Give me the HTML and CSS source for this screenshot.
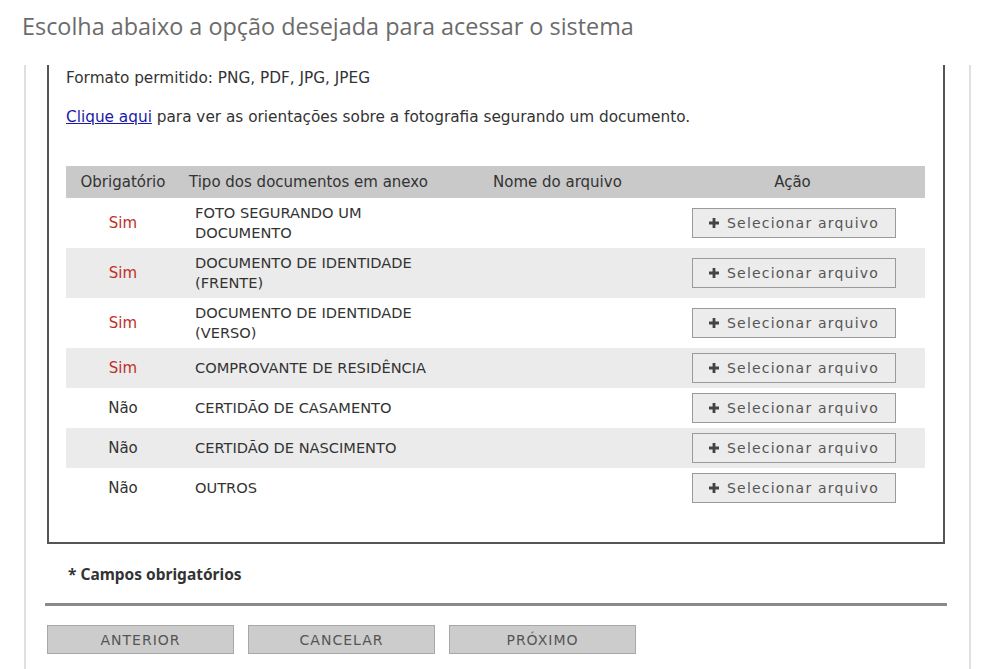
FILE: index.html
```html
<!DOCTYPE html>
<html lang="pt-BR">
<head>
<meta charset="utf-8">
<title>Anexos</title>
<link rel="stylesheet" href="styles.css">
</head>
<body>
<h1 class="title">Escolha abaixo a opção desejada para acessar o sistema</h1>
<div class="panel">
  <div class="box">
    <p class="info">Formato permitido: PNG, PDF, JPG, JPEG</p>
    <p class="info link-line"><a href="#" class="link">Clique aqui</a> para ver as orientações sobre a fotografia segurando um documento.</p>
    <table class="docs">
      <colgroup>
        <col class="c1"><col class="c2"><col class="c3"><col class="c4">
      </colgroup>
      <thead>
        <tr>
          <th class="h-req">Obrigatório</th>
          <th class="h-type">Tipo dos documentos em anexo</th>
          <th class="h-name">Nome do arquivo</th>
          <th class="h-act">Ação</th>
        </tr>
      </thead>
      <tbody>
        <tr>
          <td class="req yes">Sim</td>
          <td class="type"><div class="type-text">FOTO SEGURANDO UM DOCUMENTO</div></td>
          <td></td>
          <td class="act"><button class="pick"><svg class="plus" viewBox="0 0 10 10"><path d="M3.6 0h2.8v3.6H10v2.8H6.4V10H3.6V6.4H0V3.6h3.6z"/></svg>Selecionar arquivo</button></td>
        </tr>
        <tr>
          <td class="req yes">Sim</td>
          <td class="type"><div class="type-text">DOCUMENTO DE IDENTIDADE (FRENTE)</div></td>
          <td></td>
          <td class="act"><button class="pick"><svg class="plus" viewBox="0 0 10 10"><path d="M3.6 0h2.8v3.6H10v2.8H6.4V10H3.6V6.4H0V3.6h3.6z"/></svg>Selecionar arquivo</button></td>
        </tr>
        <tr>
          <td class="req yes">Sim</td>
          <td class="type"><div class="type-text">DOCUMENTO DE IDENTIDADE (VERSO)</div></td>
          <td></td>
          <td class="act"><button class="pick"><svg class="plus" viewBox="0 0 10 10"><path d="M3.6 0h2.8v3.6H10v2.8H6.4V10H3.6V6.4H0V3.6h3.6z"/></svg>Selecionar arquivo</button></td>
        </tr>
        <tr>
          <td class="req yes">Sim</td>
          <td class="type"><div class="type-text">COMPROVANTE DE RESIDÊNCIA</div></td>
          <td></td>
          <td class="act"><button class="pick"><svg class="plus" viewBox="0 0 10 10"><path d="M3.6 0h2.8v3.6H10v2.8H6.4V10H3.6V6.4H0V3.6h3.6z"/></svg>Selecionar arquivo</button></td>
        </tr>
        <tr>
          <td class="req">Não</td>
          <td class="type"><div class="type-text">CERTIDÃO DE CASAMENTO</div></td>
          <td></td>
          <td class="act"><button class="pick"><svg class="plus" viewBox="0 0 10 10"><path d="M3.6 0h2.8v3.6H10v2.8H6.4V10H3.6V6.4H0V3.6h3.6z"/></svg>Selecionar arquivo</button></td>
        </tr>
        <tr>
          <td class="req">Não</td>
          <td class="type"><div class="type-text">CERTIDÃO DE NASCIMENTO</div></td>
          <td></td>
          <td class="act"><button class="pick"><svg class="plus" viewBox="0 0 10 10"><path d="M3.6 0h2.8v3.6H10v2.8H6.4V10H3.6V6.4H0V3.6h3.6z"/></svg>Selecionar arquivo</button></td>
        </tr>
        <tr>
          <td class="req">Não</td>
          <td class="type"><div class="type-text">OUTROS</div></td>
          <td></td>
          <td class="act"><button class="pick"><svg class="plus" viewBox="0 0 10 10"><path d="M3.6 0h2.8v3.6H10v2.8H6.4V10H3.6V6.4H0V3.6h3.6z"/></svg>Selecionar arquivo</button></td>
        </tr>
      </tbody>
    </table>
  </div>
  <p class="required">* Campos obrigatórios</p>
  <hr class="sep">
  <div class="actions">
    <button class="nav">ANTERIOR</button>
    <button class="nav">CANCELAR</button>
    <button class="nav">PRÓXIMO</button>
  </div>
</div>
</body>
</html>
```

FILE: styles.css
```css
html, body {
  margin: 0;
  padding: 0;
  background: #ffffff;
}

body {
  font-family: "DejaVu Sans", "Noto Sans", sans-serif;
  color: #444;
  height: 669px;
  overflow: hidden;
}

.title {
  margin: 0;
  padding: 10px 0 0 22px;
  height: 54px;
  box-sizing: border-box;
  font-family: "Open Sans", sans-serif;
  font-weight: 400;
  font-size: 23.4px;
  line-height: 32px;
  color: #6b6b6b;
}

.panel {
  margin-left: 24px;
  width: 947px;
  box-sizing: border-box;
  border-left: 2px solid #e0e0e0;
  border-right: 2px solid #e0e0e0;
  margin-top: 11px;
  height: 620px;
}

.box {
  margin-left: 21px;
  width: 898px;
  box-sizing: border-box;
  border: 2px solid #555;
  border-top: none;
  padding: 3px 0 34px 17px;
}

.info {
  margin: 0;
  font-size: 15.3px;
  line-height: 20px;
  color: #333;
}

.link-line {
  margin-top: 19px;
}

.link {
  color: #1a1aa6;
  text-decoration: underline;
}

.docs {
  margin-top: 39px;
  width: 859px;
  border-collapse: collapse;
  table-layout: fixed;
  font-size: 15px;
  color: #333;
}

.c1 { width: 114px; }
.c2 { width: 300px; }
.c3 { width: 180px; }
.c4 { width: 265px; }

.docs thead tr {
  background: #c9c9c9;
  height: 32px;
}

.docs th {
  font-weight: 400;
  padding: 0;
  text-align: left;
  line-height: 20px;
}

.h-req { text-align: center !important; }
.h-type { padding-left: 9px !important; }
.h-name { padding-left: 13px !important; }
.h-act { text-align: center !important; }

.docs tbody tr:nth-child(even) {
  background: #ebebeb;
}

.docs td {
  padding: 5px 0;
  line-height: 20px;
  vertical-align: middle;
}

.req {
  text-align: center;
  color: #333;
}

.req.yes {
  color: #c0302a;
}

.type {
  padding-left: 15px !important;
}

.type-text {
  max-width: 245px;
  font-size: 14.6px;
}

.act {
  text-align: center;
}

.pick {
  width: 204px;
  height: 30px;
  margin-left: 3px;
  background: #ececec;
  border: 1px solid #9a9a9a;
  border-radius: 0;
  font-family: "DejaVu Sans", sans-serif;
  font-size: 14px;
  letter-spacing: 1.2px;
  color: #555;
  display: inline-flex;
  align-items: center;
  justify-content: center;
  gap: 8px;
  padding: 0;
}

.plus {
  width: 10px;
  height: 10px;
  fill: #444;
}

.required {
  margin: 20px 0 0 42px;
  font-family: "Noto Sans", sans-serif;
  font-size: 15.5px;
  line-height: 20px;
  font-weight: 700;
  color: #333;
}

.sep {
  margin: 19px 0 0 19px;
  width: 902px;
  height: 0;
  border: none;
  border-top: 3px solid #8a8a8a;
}

.actions {
  display: flex;
  gap: 14px;
  margin: 19px 0 0 21px;
}

.nav {
  width: 187px;
  height: 29px;
  background: #cccccc;
  border: 1px solid #a8a8a8;
  border-radius: 0;
  font-family: "DejaVu Sans", sans-serif;
  font-size: 14px;
  letter-spacing: 1px;
  color: #555;
  padding: 0;
}
```
